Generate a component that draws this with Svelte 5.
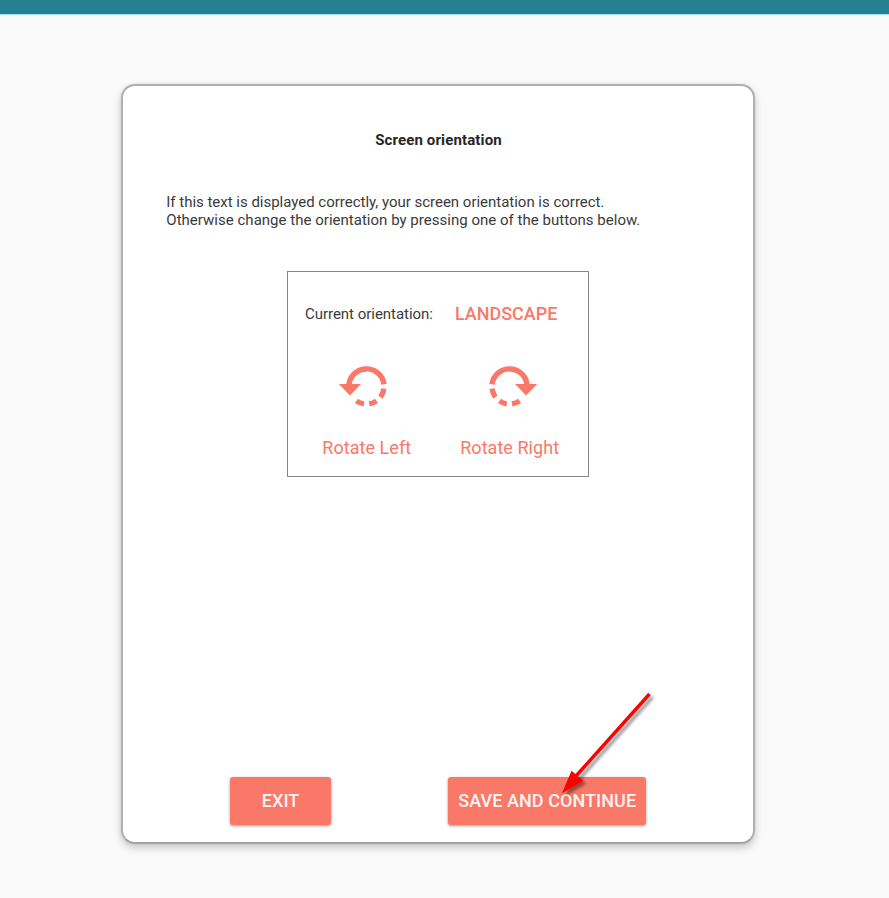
<script>
  const rotations = [
    { label: 'Rotate Left', flip: false },
    { label: 'Rotate Right', flip: true }
  ];
</script>

<div class="page">
  <header></header>
  <main>
    <h1>Screen orientation</h1>
    <p class="intro"><span class="first">If this text is displayed correctly, your screen orientation is correct.</span><br />Otherwise change the orientation by pressing one of the buttons below.</p>
    <section>
      <div class="current"><span>Current orientation:</span><strong>LANDSCAPE</strong></div>
      <div class="rotations">
        {#each rotations as r}
          <button class="rotate">
            <svg class:flip={r.flip} width="57" height="44" viewBox="-.5 0 57 44">
              <g fill="none" stroke="#fa7868" stroke-width="5.4">
                <path d="M10.4 21.5A17.6 17.6 0 0 1 45.46 19.3" />
                <path d="M45.43 23.7A17.6 17.6 0 0 1 42 32.1M38 35.9A17.6 17.6 0 0 1 30.7 38.9M25.5 38.9A17.6 17.6 0 0 1 17.9 35.9" />
              </g>
              <path d="M.3 19H22.5L11.5 30.6Z" fill="#fa7868" />
            </svg>
            <span>{r.label}</span>
          </button>
        {/each}
      </div>
    </section>
    <footer>
      <button class="exit">EXIT</button>
      <button class="save">SAVE AND CONTINUE</button>
    </footer>
  </main>
  <svg class="arrow" width="110" height="120" viewBox="0 0 110 120">
    <path d="M99.5 14L26 96" stroke="#f00" stroke-width="3.4" />
    <path d="M12 113.3L21.5 90.7L33.2 100.8Z" fill="#f00" />
  </svg>
</div>

<style>
  :global(body) { margin: 0; }
  .page { position: relative; height: 898px; background: #fafafa; font-family: Roboto, sans-serif; color: #3a3a3a; overflow: hidden; }
  header { height: 14px; background: #248091; box-shadow: 0 1px #a5e4ee; }
  main { box-sizing: border-box; width: 634px; height: 760px; margin: 70px 0 0 121px; padding: 44px 41px 17px 42px; border: 2px solid #b0b0b0; border-bottom-color: #a2a2a2; border-radius: 14px; background: #fff; box-shadow: 0 4px 8px #0003, 0 0 3px #0001; display: flex; flex-direction: column; }
  h1 { margin: 0; font-size: 15px; line-height: 20px; font-weight: 700; letter-spacing: .13px; text-align: center; color: #262626; }
  .intro { margin: 43px 0 0 1.3px; font-size: 15px; line-height: 18px; letter-spacing: .02px; white-space: nowrap; }
  .first { letter-spacing: -.015px; }
  section { box-sizing: border-box; width: 302px; height: 206px; margin: 42px 0 0 122px; border: 1px solid #888; padding-top: 29px; }
  .current { display: flex; align-items: center; height: 26px; padding-left: 17px; font-size: 15px; letter-spacing: -.03px; }
  strong { margin: 0 0 2px 22px; font-size: 18px; font-weight: 500; color: #fa7868; }
  button { border: 0; padding: 0; font: 500 18px/24px Roboto, sans-serif; }
  .rotations { display: flex; padding: 38px 0 0 34.3px; gap: 49px; }
  .rotate { display: flex; flex-direction: column; align-items: center; gap: 27px; color: #fa7868; background: none; font-weight: 400; letter-spacing: .05px; white-space: nowrap; }
  .flip { transform: scaleX(-1); }
  footer { display: flex; margin: auto 0 0 65px; gap: 117px; }
  footer button { height: 48px; border-radius: 3px; color: #fff4f2; background: #fa7868; box-shadow: 0 1px 3px #0006; letter-spacing: .07px; }
  .exit { width: 101.2px; }
  .save { width: 198px; }
  .arrow { position: absolute; left: 550px; top: 680px; filter: drop-shadow(3px 3px 1.5px #0006); }
</style>
